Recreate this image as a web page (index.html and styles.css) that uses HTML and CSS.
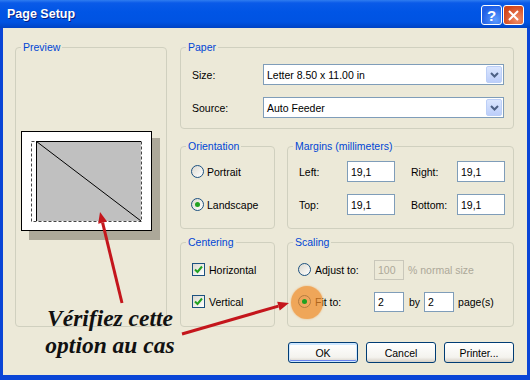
FILE: index.html
```html
<!DOCTYPE html>
<html lang="fr">

<head>
    <meta charset="UTF-8" />
    <title>Page Setup</title>
    <link rel="stylesheet" href="styles.css">
</head>

<body>

    <div class="window">
        <div class="titlebar">
            <span class="title">Page Setup</span>
            <div class="tb-buttons">
                <span class="tb-btn tb-help">?</span>
                <span class="tb-btn tb-close">
                    <svg width="11" height="11" viewBox="0 0 11 11">
                        <path d="M1 1 L10 10 M10 1 L1 10" stroke="#fff" stroke-width="2" />
                    </svg>
                </span>
            </div>
        </div>

        <div class="client">
            <div class="main">
                <fieldset class="group preview">
                    <legend>Preview</legend>
                    <svg class="preview-page" width="140" height="110" viewBox="0 0 140 110">
                        <rect x="8" y="7" width="131" height="102" fill="#aca899" />
                        <rect x="0.5" y="0.5" width="130" height="99" fill="#fff" stroke="#000" />
                        <rect x="15" y="10" width="105" height="80" fill="#c0c0c0" />
                        <rect x="10.5" y="10.5" width="110" height="80" fill="none" stroke="#444" stroke-dasharray="3 2" />
                        <path d="M15.5 90 L15.5 10.5 L120 10.5" fill="none" stroke="#000" />
                        <path d="M15.5 10.5 L120 90" stroke="#000" />
                    </svg>
                </fieldset>

                <div class="right-col">
                    <fieldset class="group paper">
                        <legend>Paper</legend>
                        <div class="paper-body">
                            <div class="field-row">
                                <span class="lbl">Size:</span>
                                <div class="combo">
                                    <span>Letter 8.50 x 11.00 in</span>
                                    <span class="combo-btn">
                                        <svg width="9" height="6" viewBox="0 0 9 6">
                                            <path d="M1 1 L4.5 4.5 L8 1" fill="none" stroke="#4d6185" stroke-width="2" />
                                        </svg>
                                    </span>
                                </div>
                            </div>
                            <div class="field-row">
                                <span class="lbl">Source:</span>
                                <div class="combo">
                                    <span>Auto Feeder</span>
                                    <span class="combo-btn">
                                        <svg width="9" height="6" viewBox="0 0 9 6">
                                            <path d="M1 1 L4.5 4.5 L8 1" fill="none" stroke="#4d6185" stroke-width="2" />
                                        </svg>
                                    </span>
                                </div>
                            </div>
                        </div>
                    </fieldset>

                    <div class="pair pair-top">
                        <fieldset class="group orientation">
                            <legend>Orientation</legend>
                            <div class="stack">
                                <label class="opt"><span class="radio"></span>Portrait</label>
                                <label class="opt"><span class="radio checked"></span>Landscape</label>
                            </div>
                        </fieldset>

                        <fieldset class="group margins">
                            <legend>Margins (millimeters)</legend>
                            <div class="margins-grid">
                                <span>Left:</span>
                                <input class="txt" type="text" value="19,1">
                                <span class="lbl-right">Right:</span>
                                <input class="txt" type="text" value="19,1">
                                <span>Top:</span>
                                <input class="txt" type="text" value="19,1">
                                <span class="lbl-right">Bottom:</span>
                                <input class="txt" type="text" value="19,1">
                            </div>
                        </fieldset>
                    </div>

                    <div class="pair pair-low">
                        <fieldset class="group centering">
                            <legend>Centering</legend>
                            <div class="stack stack-low">
                                <label class="opt"><span class="check"><svg width="9" height="9" viewBox="0 0 9 9"><path d="M1 4.5 L3.5 7 L8 1.5" fill="none" stroke="#21a121" stroke-width="2" /></svg></span>Horizontal</label>
                                <label class="opt"><span class="check"><svg width="9" height="9" viewBox="0 0 9 9"><path d="M1 4.5 L3.5 7 L8 1.5" fill="none" stroke="#21a121" stroke-width="2" /></svg></span>Vertical</label>
                            </div>
                        </fieldset>

                        <fieldset class="group scaling">
                            <legend>Scaling</legend>
                            <div class="stack stack-low scaling-body">
                                <div class="scale-row">
                                    <label class="opt scale-opt"><span class="radio"></span>Adjust to:</label>
                                    <input class="txt small disabled" type="text" value="100" disabled>
                                    <span class="muted">% normal size</span>
                                </div>
                                <div class="scale-row">
                                    <label class="opt scale-opt"><span class="radio checked"><span class="highlight"></span></span>Fit to:</label>
                                    <input class="txt small" type="text" value="2">
                                    <span class="by">by</span>
                                    <input class="txt small" type="text" value="2">
                                    <span class="pages">page(s)</span>
                                </div>
                            </div>
                        </fieldset>
                    </div>
                </div>
            </div>

            <div class="buttons">
                <button class="btn btn-default">OK</button>
                <button class="btn">Cancel</button>
                <button class="btn">Printer...</button>
            </div>
        </div>

        <!-- annotations drawn over the dialog -->
        <svg class="arrows" width="530" height="380" viewBox="0 0 530 380">
            <line x1="122" y1="303" x2="102.6" y2="222.7" stroke="#c4161c" stroke-width="3" />
            <polygon points="100,212 107,221.6 98.2,223.8" fill="#c4161c" />
            <line x1="182" y1="334" x2="278.4" y2="306.1" stroke="#c4161c" stroke-width="3" />
            <polygon points="289,303 279.7,310.4 277.2,301.8" fill="#c4161c" />
        </svg>
        <div class="note">Vérifiez cette<br>option au cas</div>
    </div>

</body>

</html>
```

FILE: styles.css
```css
* {
    box-sizing: border-box;
}

body {
    margin: 0;
    font-family: "Liberation Sans", Arial, sans-serif;
    font-size: 10.5px;
    color: #000;
    background: #ece9d8;
}

.window {
    position: relative;
    width: 530px;
    height: 380px;
}

/* title bar */
.titlebar {
    height: 28px;
    display: flex;
    align-items: flex-start;
    padding-left: 7px;
    background: linear-gradient(#2f7cf0 0, #0a5ae8 3px, #0055e5 12px, #0053e2 22px, #0043c4 28px);
}

.title {
    margin-top: 7px;
    color: #fff;
    font-weight: bold;
    font-size: 12.5px;
    text-shadow: 1px 1px 0 #0a1e80;
}

.tb-buttons {
    margin-left: auto;
    margin-top: 5px;
    margin-right: 6px;
    display: flex;
    gap: 1px;
}

.tb-btn {
    width: 21px;
    height: 20px;
    border: 1px solid #fff;
    border-radius: 3px;
    display: flex;
    align-items: center;
    justify-content: center;
}

.tb-help {
    background: radial-gradient(circle at 70% 75%, #5b9bff, #1f5fe6 70%);
    color: #fff;
    font-weight: bold;
    font-size: 15px;
}

.tb-close {
    background: radial-gradient(circle at 70% 75%, #f08d67, #d1461c 75%);
}

/* dialog body */
.client {
    height: 352px;
    border: solid #0a45d6;
    border-width: 0 3px 5px 3px;
    background: #ece9d8;
}

.main {
    display: flex;
    gap: 13px;
    padding: 13px 0 0 12px;
}

.group {
    margin: 0;
    padding: 0;
    min-width: 0;
    border: 1px solid #d0d0bf;
    border-radius: 4px;
}

.group legend {
    margin-left: 5px;
    padding: 0 2px;
    line-height: 12px;
    color: #0046d5;
}

.preview {
    width: 152px;
    height: 286px;
}

.preview-page {
    display: block;
    margin: 78px 0 0 5px;
}

.right-col {
    width: 334px;
    display: flex;
    flex-direction: column;
}

.paper {
    height: 88px;
}

.paper-body {
    display: flex;
    flex-direction: column;
    gap: 12px;
    padding: 11px 0 0 11px;
}

.field-row {
    display: flex;
    align-items: center;
    height: 21px;
}

.lbl {
    width: 71px;
}

.combo {
    width: 241px;
    height: 21px;
    display: flex;
    align-items: center;
    padding-left: 3px;
    border: 1px solid #7f9db9;
    background: #fff;
}

.combo-btn {
    margin-left: auto;
    margin-right: 1px;
    width: 16px;
    height: 17px;
    display: flex;
    align-items: center;
    justify-content: center;
    border: 1px solid #bccff7;
    border-radius: 2px;
    background: linear-gradient(#dbe6fe, #bccefa);
}

.pair {
    display: flex;
    gap: 12px;
}

.pair-top {
    margin-top: 11px;
    height: 89px;
}

.pair-low {
    margin-top: 7px;
    height: 91px;
}

.orientation,
.centering {
    width: 95px;
}

.margins,
.scaling {
    flex: 1;
}

.stack {
    display: flex;
    flex-direction: column;
    gap: 12px;
    padding: 9px 0 0 10px;
}

.stack-low {
    gap: 11px;
    padding: 11px 0 0 11px;
}

.opt {
    display: flex;
    align-items: center;
    gap: 3px;
    height: 21px;
}

.radio {
    position: relative;
    width: 13px;
    height: 13px;
    border: 1px solid #1c5180;
    border-radius: 50%;
    background: linear-gradient(135deg, #dcd9cf, #fff);
}

.radio.checked::after {
    content: "";
    position: absolute;
    left: 3px;
    top: 3px;
    width: 5px;
    height: 5px;
    border-radius: 50%;
    background: #21a121;
}

.check {
    width: 13px;
    height: 13px;
    border: 1px solid #1c5180;
    background: linear-gradient(135deg, #dcd9cf, #fff);
    display: flex;
    align-items: center;
    justify-content: center;
    margin-right: 1px;
}

.margins-grid {
    display: grid;
    grid-template-columns: 48px 48px 62px 48px;
    grid-auto-rows: 21px;
    row-gap: 12px;
    align-items: center;
    padding: 9px 0 0 11px;
}

.lbl-right {
    padding-left: 16px;
}

.txt {
    width: 48px;
    height: 21px;
    margin: 0;
    padding: 0 3px;
    border: 1px solid #7f9db9;
    background: #fff;
    font: inherit;
    color: #000;
}

.txt.small {
    width: 30px;
    height: 20px;
}

.txt.disabled {
    border-color: #c9c7ba;
    background: #ece9d8;
    color: #aca899;
}

.scaling-body {
    padding-left: 10px;
}

.scale-row {
    display: flex;
    align-items: center;
    height: 21px;
}

.scale-opt {
    width: 76px;
    gap: 4px;
}

.muted {
    margin-left: 4px;
    color: #aca899;
}

.by {
    margin-left: 5px;
    margin-right: 4px;
}

.pages {
    margin-left: 4px;
}

/* orange marker over the "Fit to" radio */
.highlight {
    position: absolute;
    left: -8px;
    top: -10px;
    width: 32px;
    height: 33px;
    border-radius: 50%;
    background: rgba(240, 140, 40, 0.72);
    box-shadow: 0 0 2px rgba(240, 140, 40, 0.6);
}

.buttons {
    display: flex;
    justify-content: flex-end;
    gap: 8px;
    margin-top: 15px;
    padding-right: 13px;
}

.btn {
    width: 70px;
    height: 21px;
    padding: 0;
    border: 1px solid #003c74;
    border-radius: 3px;
    background: linear-gradient(#fff, #f4f3ee 75%, #d6d0c5);
    font: inherit;
    color: #000;
}

.btn-default {
    box-shadow: inset 0 0 0 1px #cee7ff, inset 0 -2px 0 #6982ee, inset 0 2px 0 #cee7ff;
}

/* annotation */
.arrows {
    position: absolute;
    left: 0;
    top: 0;
    pointer-events: none;
}

.note {
    position: absolute;
    left: 40px;
    top: 305px;
    width: 140px;
    text-align: center;
    font-family: "Liberation Serif", "Times New Roman", serif;
    font-weight: bold;
    font-style: italic;
    font-size: 23.5px;
    line-height: 27px;
    color: #111;
}
```
